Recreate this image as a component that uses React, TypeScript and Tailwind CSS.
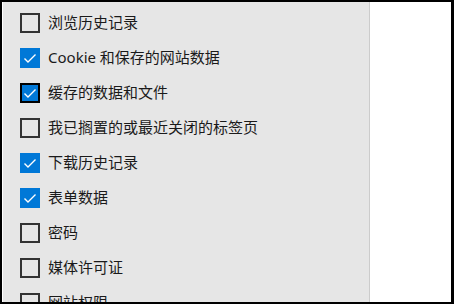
const items = [
  { label: "浏览历史记录", checked: false },
  { label: "Cookie 和保存的网站数据", checked: true },
  { label: "缓存的数据和文件", checked: true, focused: true },
  { label: "我已搁置的或最近关闭的标签页", checked: false },
  { label: "下载历史记录", checked: true },
  { label: "表单数据", checked: true },
  { label: "密码", checked: false },
  { label: "媒体许可证", checked: false },
  { label: "网站权限", checked: false },
];

function Box({ checked, focused }: { checked: boolean; focused?: boolean }) {
  if (!checked) {
    return <div className="w-5 h-5 shrink-0 border-2 border-[#333333]" />;
  }
  return (
    <div
      className={
        "w-5 h-5 shrink-0 bg-[#0078d7] flex items-center justify-center " +
        (focused ? "border-2 border-black" : "")
      }
    >
      <svg viewBox="0 0 20 20" className="w-5 h-5 shrink-0">
        <path d="M4.5 10.5 L8 14 L15.5 6.5" fill="none" stroke="white" strokeWidth="1.4" />
      </svg>
    </div>
  );
}

export default function App() {
  return (
    <div className="w-[454px] h-[304px] bg-black pt-[2px] pl-[2px] pr-[3px] pb-[2px] overflow-hidden">
      <div className="flex h-full overflow-hidden">
        <div
          className="w-[367px] h-full bg-[#e6e6e6] border-l border-white pl-[17px] pt-[3px] text-[15px] text-[#1a1a1a]"
          style={{ fontFamily: '"Noto Sans", "Noto Sans CJK SC", sans-serif' }}
        >
          {items.map((it) => (
            <div key={it.label} className="h-[35px] flex items-center gap-2">
              <Box checked={it.checked} focused={it.focused} />
              <span className="leading-none whitespace-nowrap">{it.label}</span>
            </div>
          ))}
        </div>
        <div className="w-px h-full bg-[#cccccc]" />
        <div className="flex-1 h-full bg-white" />
      </div>
    </div>
  );
}
